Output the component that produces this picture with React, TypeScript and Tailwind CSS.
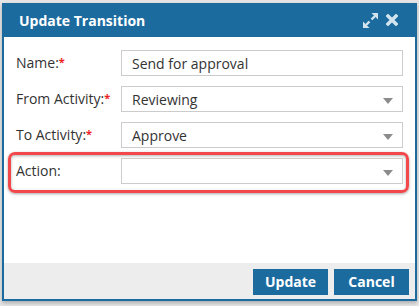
import React from "react";

const font = { fontFamily: '"Open Sans", "Noto Sans", sans-serif' };

function Arrow() {
  return (
    <svg width="10" height="6" viewBox="0 0 10 6" className="absolute right-[9px] top-[11px]">
      <path d="M0 0 L10 0 L5 6 Z" fill="#8c8c8c" />
    </svg>
  );
}

function Label({ text, req }: { text: string; req?: boolean }) {
  return (
    <div className="w-[105px] shrink-0 text-[14px] text-[#333333] leading-none">
      {text}
      {req && <sup className="text-[#ee2222] text-[11px] relative top-[-2px] font-bold">*</sup>}
    </div>
  );
}

function Field({ value, select }: { value: string; select?: boolean }) {
  return (
    <div className="relative w-[282px] h-[26px] border border-[#cccccc] bg-white flex items-center pl-[10px] text-[14px] text-[#333333]">
      {value}
      {select && <Arrow />}
    </div>
  );
}

export default function App() {
  return (
    <div className="w-[419px] h-[306px] bg-[#e6e6e6] pt-[3px] pl-[2px]" style={font}>
      <div className="w-[415px] h-[298px] flex flex-col shadow-[0_2px_4px_rgba(0,0,0,0.25)]">
        <div className="h-[34px] bg-[#1c6b9f] flex items-center pl-[17px] pr-[19px] shrink-0">
          <div className="text-white font-bold text-[14px] flex-1">Update Transition</div>
          <svg width="15" height="15" viewBox="0 0 15 15" className="mr-[8px]">
            <g fill="#d3e4ef">
              <path d="M8.5 0 L15 0 L15 6.5 Z" />
              <path d="M0 8.5 L0 15 L6.5 15 Z" />
            </g>
            <g stroke="#d3e4ef" strokeWidth="2.4">
              <line x1="12" y1="3" x2="8.5" y2="6.5" />
              <line x1="3" y1="12" x2="6.5" y2="8.5" />
            </g>
          </svg>
          <svg width="12" height="12" viewBox="0 0 12 12">
            <g stroke="#d3e4ef" strokeWidth="3.4" strokeLinecap="square">
              <line x1="2" y1="2" x2="10" y2="10" />
              <line x1="10" y1="2" x2="2" y2="10" />
            </g>
          </svg>
        </div>
        <div className="flex-1 flex flex-col border-x-2 border-b-2 border-[#1c6b9f]">
          <div className="flex-1 bg-white pt-[13px] pl-[12px] flex flex-col gap-[10px]">
            <div className="flex items-center">
              <Label text="Name:" req />
              <Field value="Send for approval" />
            </div>
            <div className="flex items-center">
              <Label text="From Activity:" req />
              <Field value="Reviewing" select />
            </div>
            <div className="flex items-center">
              <Label text="To Activity:" req />
              <Field value="Approve" select />
            </div>
            <div className="flex items-center relative">
              <div className="absolute left-[-8px] top-[-6px] w-[401px] h-[41px] rounded-[7px] border-[3px] border-[#f2474b] shadow-[0_1px_3px_rgba(0,0,0,0.35),inset_0_1px_3px_rgba(0,0,0,0.3)]" />
              <Label text="Action:" />
              <Field value="" select />
            </div>
          </div>
          <div className="h-[36px] bg-[#ededed] flex justify-end items-start pt-[6px] pr-[6px] gap-[6px]">
            <button className="w-[75px] h-[26px] bg-[#1c6b9f] text-white font-bold text-[14px] leading-none">Update</button>
            <button className="w-[75px] h-[26px] bg-[#1c6b9f] text-white font-bold text-[14px] leading-none">Cancel</button>
          </div>
        </div>
      </div>
    </div>
  );
}
